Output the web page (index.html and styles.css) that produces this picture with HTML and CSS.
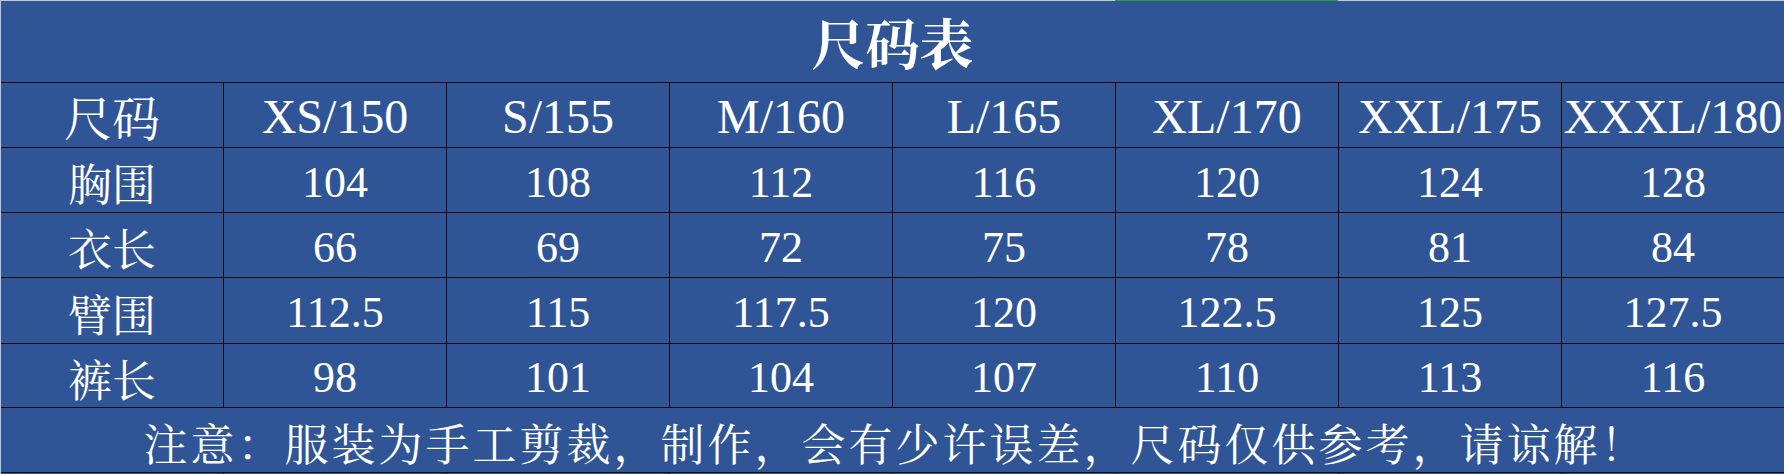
FILE: index.html
```html
<!DOCTYPE html>
<html lang="zh-CN">
<head>
<meta charset="utf-8">
<title>尺码表</title>
<link rel="stylesheet" href="styles.css">
</head>
<body>
<div class="sheet">
  <div class="colbar">
    <span class="seg seg-a"></span><span class="seg seg-sel"></span><span class="seg seg-b"></span>
  </div>
  <div class="grid">
    <div class="cell title cjk span">尺码表</div>

    <div class="cell head cjk first">尺码</div>
    <div class="cell head num">XS/150</div>
    <div class="cell head num">S/155</div>
    <div class="cell head num">M/160</div>
    <div class="cell head num">L/165</div>
    <div class="cell head num">XL/170</div>
    <div class="cell head num">XXL/175</div>
    <div class="cell head num">XXXL/180</div>

    <div class="cell row cjk first">胸围</div>
    <div class="cell row num">104</div>
    <div class="cell row num">108</div>
    <div class="cell row num">112</div>
    <div class="cell row num">116</div>
    <div class="cell row num">120</div>
    <div class="cell row num">124</div>
    <div class="cell row num">128</div>

    <div class="cell row cjk first">衣长</div>
    <div class="cell row num">66</div>
    <div class="cell row num">69</div>
    <div class="cell row num">72</div>
    <div class="cell row num">75</div>
    <div class="cell row num">78</div>
    <div class="cell row num">81</div>
    <div class="cell row num">84</div>

    <div class="cell row tall cjk first">臂围</div>
    <div class="cell row tall num">112.5</div>
    <div class="cell row tall num">115</div>
    <div class="cell row tall num">117.5</div>
    <div class="cell row tall num">120</div>
    <div class="cell row tall num">122.5</div>
    <div class="cell row tall num">125</div>
    <div class="cell row tall num">127.5</div>

    <div class="cell row short cjk first">裤长</div>
    <div class="cell row short num">98</div>
    <div class="cell row short num">101</div>
    <div class="cell row short num">104</div>
    <div class="cell row short num">107</div>
    <div class="cell row short num">110</div>
    <div class="cell row short num">113</div>
    <div class="cell row short num">116</div>

    <div class="cell note cjk span">注意：服装为手工剪裁，制作，会有少许误差，尺码仅供参考，请谅解！</div>

    <div class="cell blank first"></div>
    <div class="cell blank"></div>
    <div class="cell blank"></div>
    <div class="cell blank"></div>
    <div class="cell blank"></div>
    <div class="cell blank"></div>
    <div class="cell blank"></div>
    <div class="cell blank"></div>
  </div>
</div>
</body>
</html>
```

FILE: styles.css
```css
html, body {
  margin: 0;
  padding: 0;
  background: #2f5597;
  overflow: hidden;
}

.sheet {
  width: 1784px;
  height: 474px;
  overflow: hidden;
  border-left: 1px solid #c4c4c4;
  box-sizing: border-box;
  color: #ffffff;
}

.colbar {
  display: flex;
  height: 1px;
}

.seg {
  display: block;
  height: 1px;
}

.seg-a {
  width: 1114px;
  background: #c6c6c6;
}

.seg-sel {
  width: 223px;
  background: #22a33a;
}

.seg-b {
  flex: 1;
  background: #c6c6c6;
}

.grid {
  display: grid;
  grid-template-columns: 222px repeat(7, 223px);
}

.cell {
  box-sizing: border-box;
  display: flex;
  align-items: center;
  justify-content: center;
  border-left: 1px solid #0d0d0d;
  white-space: nowrap;
}

.cell.first {
  border-left: none;
}

.span {
  grid-column: 1 / -1;
  border-left: none;
}

.num {
  font-family: "Liberation Serif", "Times New Roman", serif;
}

.cjk {
  font-family: "KaiTi", "STKaiti", "AR PL UKai CN", "Noto Serif CJK SC", "Noto Sans CJK SC", serif;
  line-height: 1;
}

.title {
  height: 81px;
  font-size: 54px;
  font-weight: 700;
  padding-top: 1px;
}

.head {
  height: 65px;
  border-top: 1px solid #0d0d0d;
  font-size: 48px;
  padding-top: 2px;
}

.row {
  height: 65px;
  border-top: 1px solid #0d0d0d;
  font-size: 44px;
  padding-top: 4px;
}

.row.tall {
  height: 66px;
}

.row.short {
  height: 64px;
}

.note {
  height: 65px;
  border-top: 1px solid #0d0d0d;
  font-size: 44px;
  letter-spacing: 3px;
  padding-top: 4px;
  padding-left: 6px;
}

.blank {
  height: 20px;
  border-top: 1px solid #0d0d0d;
}
```
